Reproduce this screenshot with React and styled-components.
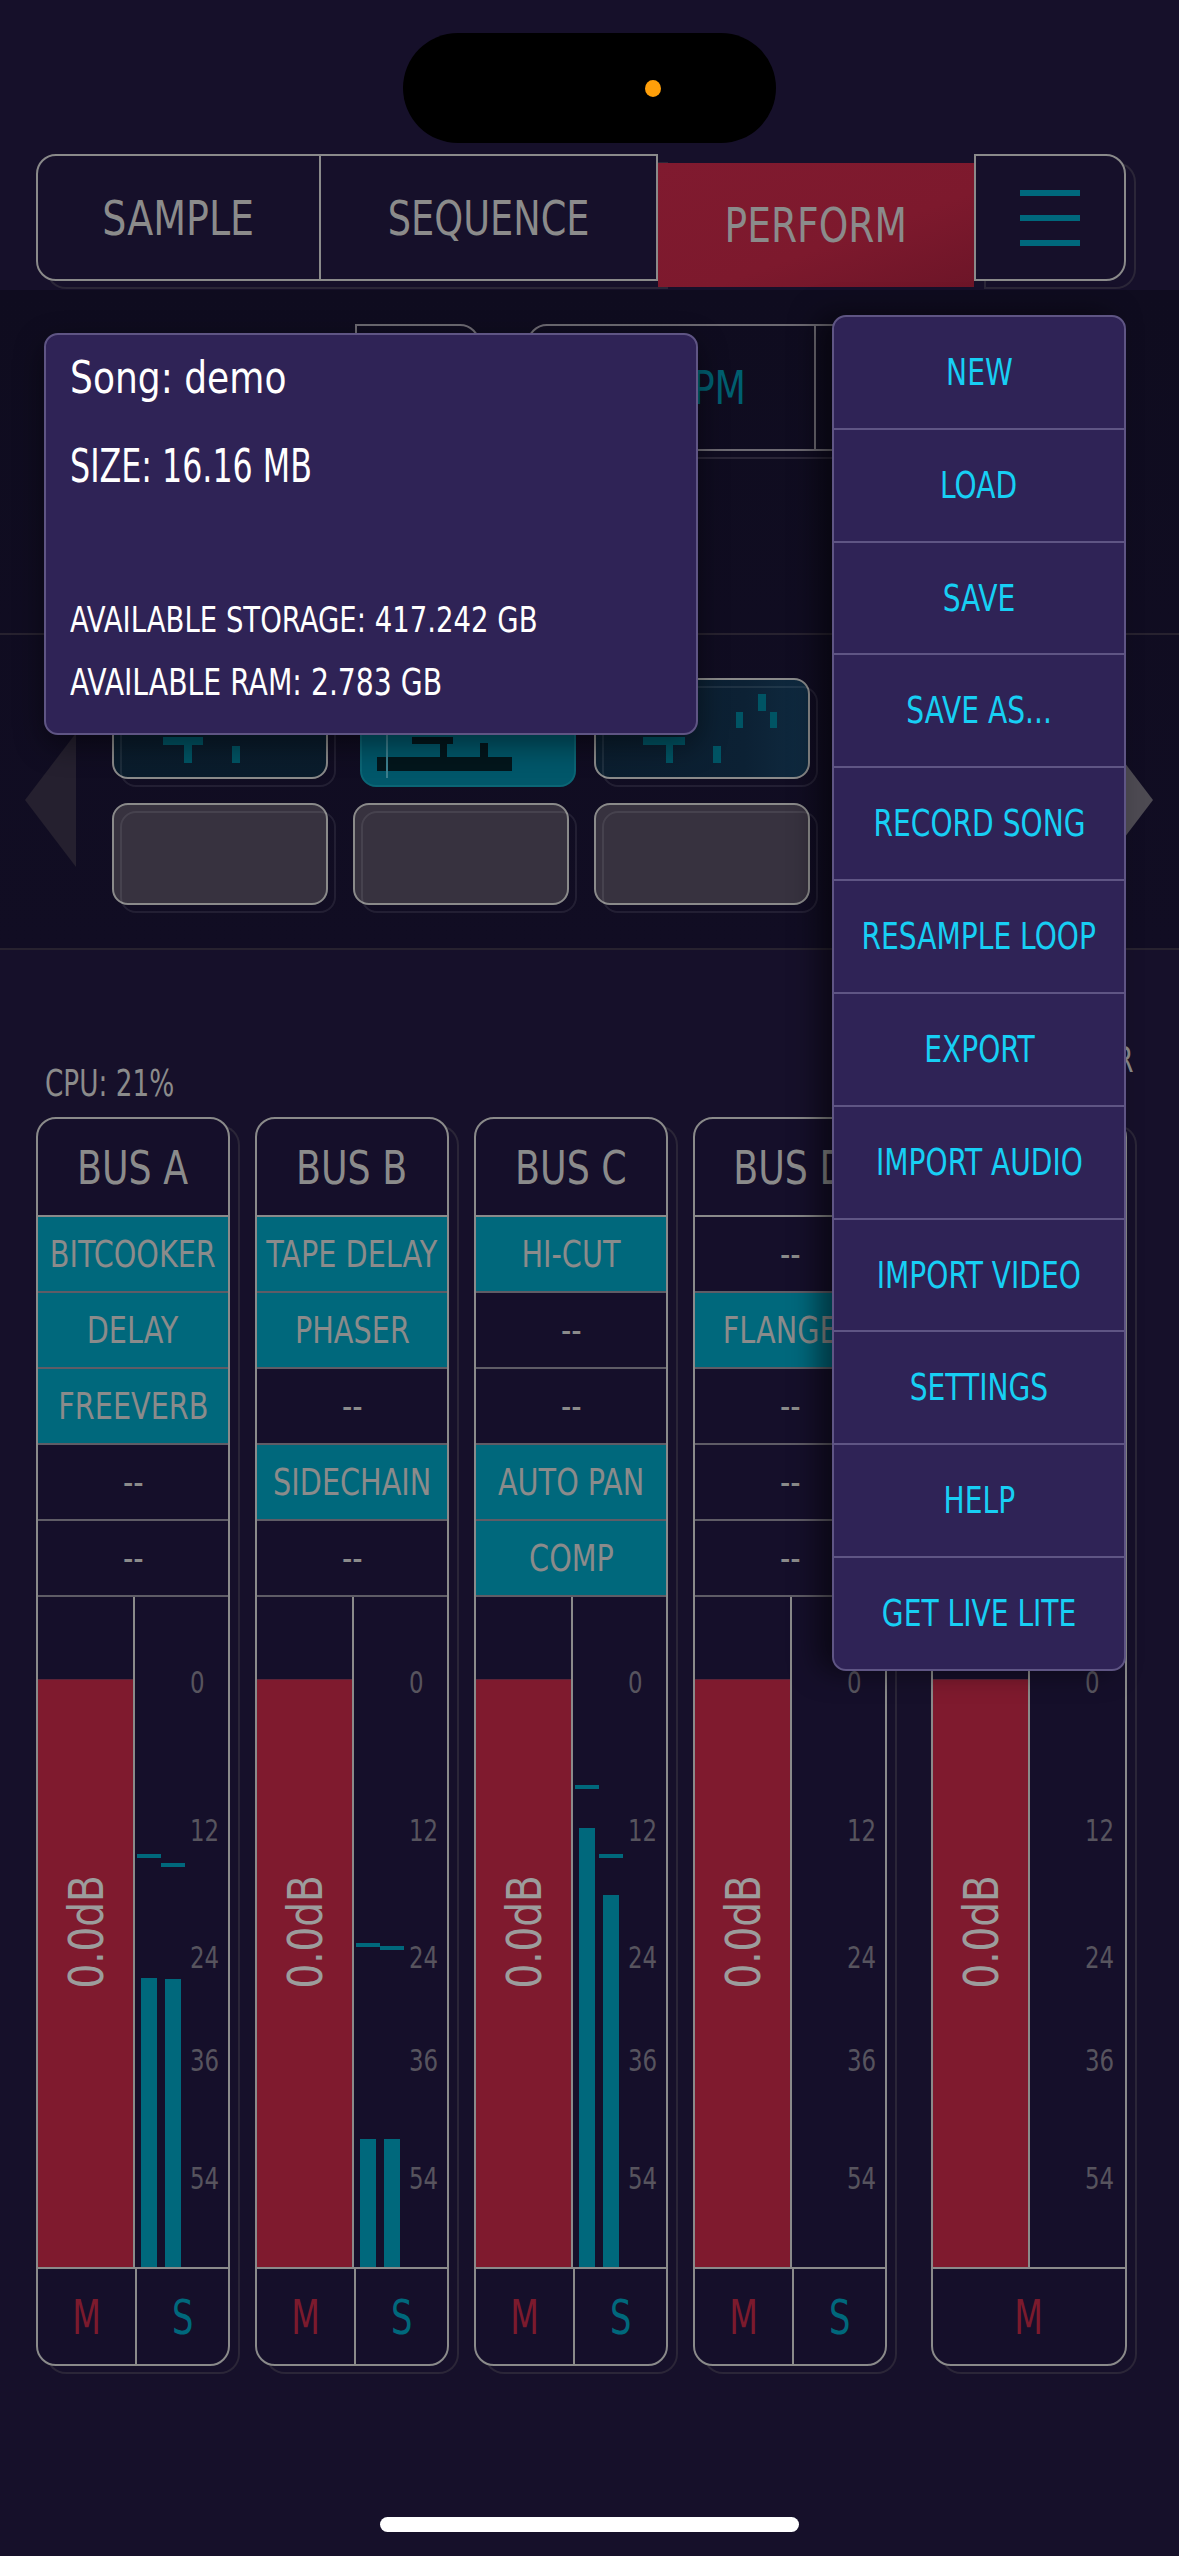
import React from 'react';
import styled, { createGlobalStyle, css } from 'styled-components';

const FONT = `"Liberation Sans Narrow", "DejaVu Sans Condensed", "Liberation Sans", sans-serif`;

const colors = {
  page: '#16102a',
  deck: '#110d22',
  line: '#8a8a8a',
  slotLine: '#5f5c66',
  ring: '#2b2638',
  text: '#8b8b8b',
  teal: '#00687c',
  tealDim: '#005f70',
  red: '#7f1a2e',
  purple: '#2f2356',
  purpleEdge: '#5f5584',
  cyan: '#17cff4',
};

const GlobalStyle = createGlobalStyle`
  html, body { margin: 0; padding: 0; background: ${colors.page}; }
  body { font-family: ${FONT}; }
  * { box-sizing: border-box; }
`;

const ring = (bg) => css`
  box-shadow: 10px 8px 0 -2px ${bg}, 10px 8px 0 0 ${colors.ring};
`;

// the app's font is narrower than anything installed, so squeeze the glyphs
const Squeeze = styled.span`
  display: inline-block;
  white-space: nowrap;
  transform: scaleX(${(p) => p.$sx || 0.85});
  transform-origin: ${(p) => p.$origin || 'center'};
`;

const Screen = styled.div`
  position: relative;
  width: 1179px;
  height: 2556px;
  overflow: hidden;
  background: ${colors.page};
  color: ${colors.text};
  font-family: ${FONT};
`;

const StatusBar = styled.div`
  height: 154px;
  padding-top: 33px;
  display: flex;
  justify-content: center;
`;

const Island = styled.div`
  width: 373px;
  height: 110px;
  border-radius: 55px;
  background: #000;
  display: flex;
  align-items: center;
  justify-content: flex-end;
  padding-right: 115px;
`;

const Camera = styled.span`
  width: 16px;
  height: 17px;
  border-radius: 50%;
  background: #ff9f0a;
`;

const TabBar = styled.nav`
  display: flex;
  margin-left: 36px;
  width: 1090px;
  height: 127px;
`;

const TabGroup = styled.div`
  display: flex;
  width: 622px;
  height: 127px;
  border: 2px solid ${colors.line};
  border-radius: 20px 0 0 20px;
  background: ${colors.page};
  ${ring(colors.page)}
`;

const Tab = styled.div`
  display: flex;
  align-items: center;
  justify-content: center;
  width: ${(p) => (p.$w ? `${p.$w}px` : 'auto')};
  flex: ${(p) => (p.$w ? 'none' : 1)};
  font-size: 48px;
  color: ${colors.text};
  & + & {
    border-left: 2px solid ${colors.line};
  }
`;

const ActiveTab = styled.div`
  width: 316px;
  height: 124px;
  margin-top: 9px;
  display: flex;
  align-items: center;
  justify-content: center;
  font-size: 48px;
  color: ${colors.text};
  background: linear-gradient(160deg, #801a2f 0%, #7d192d 60%, #6d1528 100%);
`;

const MenuButton = styled.div`
  width: 152px;
  height: 127px;
  border: 2px solid ${colors.line};
  border-radius: 0 20px 20px 0;
  display: flex;
  flex-direction: column;
  align-items: center;
  justify-content: center;
  gap: 19px;
  background: ${colors.page};
  ${ring(colors.page)}
`;

const BurgerLine = styled.span`
  width: 60px;
  height: 6px;
  background: ${colors.teal};
`;

const Deck = styled.section`
  margin-top: 9px;
  height: 658px;
  padding-top: 34px;
  display: flex;
  flex-direction: column;
  background: linear-gradient(180deg, #0f0c1f 0%, #110d23 100%);
`;

const TransportRow = styled.div`
  display: flex;
  height: 127px;
  margin-left: 355px;
  gap: 47px;
`;

const TransportBox = styled.div`
  display: flex;
  width: ${(p) => p.$w}px;
  border: 2px solid #6d6a72;
  border-radius: ${(p) => p.$radius};
  ${ring(colors.deck)}
`;

const TransportCell = styled.div`
  display: flex;
  align-items: center;
  justify-content: flex-end;
  width: ${(p) => (p.$w ? `${p.$w}px` : 'auto')};
  flex: ${(p) => (p.$w ? 'none' : 1)};
  padding-right: ${(p) => p.$pr || 0}px;
  font-size: 47px;
  color: ${colors.tealDim};
  & + & {
    border-left: 2px solid #6d6a72;
  }
`;

const PadSection = styled.div`
  margin-top: auto;
  height: 315px;
  border-top: 2px solid #27222f;
  display: flex;
  align-items: center;
`;

const Arrow = styled.svg`
  flex: none;
  margin-top: 16px;
  margin-left: ${(p) => p.$ml || 0}px;
`;

const PadGrid = styled.div`
  display: grid;
  grid-template-columns: repeat(3, 216px);
  grid-template-rows: 101px 102px;
  column-gap: 25px;
  row-gap: 24px;
  margin-left: 36px;
`;

const Pad = styled.div`
  position: relative;
  border-radius: 16px;
  border: 2px solid ${(p) => (p.$active ? '#0b6575' : colors.line)};
  background: ${(p) => p.$bg};
  ${(p) =>
    p.$active
      ? css`
          transform: translate(7px, 8px);
        `
      : css`
          &::after {
            content: '';
            position: absolute;
            top: 6px;
            left: 6px;
            right: -10px;
            bottom: -10px;
            border: 2px solid rgba(255, 255, 255, 0.08);
            border-radius: 16px;
            pointer-events: none;
          }
        `}
`;

const PadArt = styled.svg`
  position: absolute;
  inset: 0;
`;

const Mixer = styled.section`
  border-top: 2px solid #27222f;
  padding-top: 115px;
`;

const LabelRow = styled.div`
  display: flex;
  justify-content: space-between;
  align-items: flex-start;
  margin-left: 45px;
  width: 1089px;
  height: 37px;
  font-size: 37px;
  line-height: 37px;
  color: ${colors.text};
`;

const MasterLabel = styled.span`
  margin-top: -23px;
  font-size: 35px;
`;

const Strips = styled.div`
  display: flex;
  gap: 25px;
  margin-top: 15px;
  margin-left: 36px;
`;

const Strip = styled.div`
  width: ${(p) => p.$w}px;
  margin-left: ${(p) => p.$ml || 0}px;
  height: 1249px;
  display: flex;
  flex-direction: column;
  border: 2px solid ${colors.line};
  border-radius: 20px;
  background: #150f2a;
  overflow: hidden;
  ${ring(colors.page)}
`;

const StripHeader = styled.div`
  height: 98px;
  flex: none;
  display: flex;
  align-items: center;
  justify-content: center;
  border-bottom: 2px solid ${colors.line};
  font-size: 47px;
  color: ${colors.text};
`;

const Slot = styled.div`
  height: 76px;
  flex: none;
  display: flex;
  align-items: center;
  justify-content: center;
  border-bottom: 2px solid ${colors.slotLine};
  background: ${(p) => (p.$on ? colors.teal : 'transparent')};
  font-size: 38px;
  color: ${colors.text};
  &:last-of-type {
    border-bottom-color: ${colors.line};
  }
`;

const MeterArea = styled.div`
  height: 672px;
  flex: none;
  display: flex;
  border-bottom: 2px solid ${colors.line};
`;

const FaderHalf = styled.div`
  position: relative;
  width: 97px;
  display: flex;
  flex-direction: column;
  border-right: 2px solid ${colors.line};
`;

const FaderGap = styled.div`
  height: 82px;
  flex: none;
`;

const FaderFill = styled.div`
  flex: 1;
  background: ${colors.red};
  border-top: 1px solid #5b2338;
`;

const DbLabel = styled.span`
  position: absolute;
  left: 50%;
  top: 50%;
  transform: translate(-50%, -50%) rotate(-90deg) scaleX(0.9);
  font-size: 48px;
  color: #9c9c9c;
  white-space: nowrap;
`;

const MeterHalf = styled.div`
  position: relative;
  flex: 1;
`;

const ScaleLabel = styled.span`
  position: absolute;
  left: 55px;
  font-size: 31px;
  line-height: 31px;
  color: #57545e;
  transform: scaleX(0.82);
  transform-origin: left;
`;

const MeterBar = styled.span`
  position: absolute;
  bottom: 0;
  left: ${(p) => (p.$ch ? 30 : 6)}px;
  width: 16px;
  background: ${colors.teal};
`;

const PeakMark = styled.span`
  position: absolute;
  left: ${(p) => (p.$ch ? 26 : 2)}px;
  width: 24px;
  height: 4px;
  background: ${colors.teal};
`;

const ButtonRow = styled.div`
  flex: 1;
  display: flex;
`;

const ToggleButton = styled.div`
  display: flex;
  align-items: center;
  justify-content: center;
  width: ${(p) => (p.$half ? '97px' : 'auto')};
  flex: ${(p) => (p.$half ? 'none' : 1)};
  font-size: 48px;
  color: ${(p) => (p.$solo ? colors.teal : '#7b1a2d')};
  & + & {
    border-left: 2px solid ${colors.line};
  }
`;

const HomeIndicator = styled.div`
  margin-top: 151px;
  margin-left: 380px;
  width: 419px;
  height: 15px;
  border-radius: 8px;
  background: #fff;
`;

const InfoPopup = styled.div`
  position: absolute;
  left: 44px;
  top: 333px;
  width: 654px;
  height: 402px;
  padding: 21px 0 0 24px;
  border: 2px solid ${colors.purpleEdge};
  border-radius: 14px;
  background: ${colors.purple};
  color: #fff;
  box-shadow: 0 10px 30px rgba(0, 0, 0, 0.45);
`;

const InfoLine = styled.div`
  font-size: ${(p) => p.$size}px;
  line-height: ${(p) => p.$lh}px;
  margin-top: ${(p) => p.$mt || 0}px;
  white-space: nowrap;
  transform: scaleX(${(p) => p.$sx});
  transform-origin: left;
`;

const FileMenu = styled.ul`
  position: absolute;
  left: 832px;
  top: 315px;
  width: 294px;
  height: 1356px;
  margin: 0;
  padding: 0;
  list-style: none;
  display: flex;
  flex-direction: column;
  border: 2px solid ${colors.purpleEdge};
  border-radius: 14px;
  background: ${colors.purple};
  overflow: hidden;
  box-shadow: -14px 0 28px rgba(0, 0, 0, 0.5);
`;

const MenuItem = styled.li`
  flex: 1;
  display: flex;
  align-items: center;
  justify-content: center;
  font-size: 37px;
  color: ${colors.cyan};
  & + & {
    border-top: 2px solid ${colors.purpleEdge};
  }
`;

const SCALE = [
  { label: '0', y: 85 },
  { label: '12', y: 233 },
  { label: '24', y: 360 },
  { label: '36', y: 463 },
  { label: '54', y: 581 },
];

const BUSES = [
  {
    name: 'BUS A',
    slots: [['BITCOOKER', 1], ['DELAY', 1], ['FREEVERB', 1], ['--'], ['--']],
    bars: [289, 288],
    peaks: [257, 266],
  },
  {
    name: 'BUS B',
    slots: [['TAPE DELAY', 1], ['PHASER', 1], ['--'], ['SIDECHAIN', 1], ['--']],
    bars: [128, 128],
    peaks: [346, 349],
  },
  {
    name: 'BUS C',
    slots: [['HI-CUT', 1], ['--'], ['--'], ['AUTO PAN', 1], ['COMP', 1]],
    bars: [439, 372],
    peaks: [188, 257],
  },
  {
    name: 'BUS D',
    slots: [['--'], ['FLANGER', 1], ['--'], ['--'], ['--']],
    bars: [0, 0],
    peaks: null,
  },
];

const MENU = [
  'NEW',
  'LOAD',
  'SAVE',
  'SAVE AS...',
  'RECORD SONG',
  'RESAMPLE LOOP',
  'EXPORT',
  'IMPORT AUDIO',
  'IMPORT VIDEO',
  'SETTINGS',
  'HELP',
  'GET LIVE LITE',
];

const PADS = [
  {
    bg: 'linear-gradient(180deg, #0b1e2f 0%, #0a1c2c 100%)',
    fill: '#005464',
    rects: [[49, 57, 40, 8], [70, 65, 8, 18], [118, 66, 8, 17], [150, 20, 8, 22]],
  },
  {
    active: true,
    bg: '#01576a',
    fill: '#03161c',
    rects: [[50, 49, 41, 7], [78, 55, 7, 14], [118, 55, 8, 14], [15, 69, 135, 14]],
    playhead: 24,
  },
  {
    bg: 'linear-gradient(90deg, #0b1e2f 0%, #0c2134 70%, #0f2a40 100%)',
    fill: '#005464',
    rects: [[162, 14, 8, 17], [140, 32, 7, 16], [174, 32, 7, 16], [47, 57, 42, 8], [70, 65, 7, 18], [117, 66, 8, 17]],
  },
  { bg: '#37323f' },
  { bg: '#37323f' },
  { bg: '#37323f' },
];

function PadTile({ pad }) {
  return (
    <Pad $bg={pad.bg} $active={pad.active}>
      {pad.rects && (
        <PadArt width="212" height="97">
          {pad.rects.map(([x, y, w, h], i) => (
            <rect key={i} x={x} y={y} width={w} height={h} fill={pad.fill} />
          ))}
          {pad.playhead && <rect x={pad.playhead} y="0" width="2" height="90" fill="#3c7f8e" />}
        </PadArt>
      )}
    </Pad>
  );
}

function Meter({ bars, peaks }) {
  return (
    <MeterHalf>
      {SCALE.map((s) => (
        <ScaleLabel key={s.label} style={{ top: s.y - 15 }}>
          {s.label}
        </ScaleLabel>
      ))}
      {bars &&
        bars.map((h, i) => (h > 0 ? <MeterBar key={i} $ch={i} style={{ height: h }} /> : null))}
      {peaks && peaks.map((t, i) => <PeakMark key={i} $ch={i} style={{ top: t }} />)}
    </MeterHalf>
  );
}

function Fader() {
  return (
    <FaderHalf>
      <FaderGap />
      <FaderFill />
      <DbLabel>0.0dB</DbLabel>
    </FaderHalf>
  );
}

function BusStrip({ bus }) {
  return (
    <Strip $w={194}>
      <StripHeader>
        <Squeeze $sx={0.86}>{bus.name}</Squeeze>
      </StripHeader>
      {bus.slots.map(([label, on], i) => (
        <Slot key={i} $on={!!on}>
          <Squeeze $sx={0.84}>{label}</Squeeze>
        </Slot>
      ))}
      <MeterArea>
        <Fader />
        <Meter bars={bus.bars} peaks={bus.peaks} />
      </MeterArea>
      <ButtonRow>
        <ToggleButton $half>
          <Squeeze $sx={0.77}>M</Squeeze>
        </ToggleButton>
        <ToggleButton $solo>
          <Squeeze $sx={0.78}>S</Squeeze>
        </ToggleButton>
      </ButtonRow>
    </Strip>
  );
}

function MasterStrip() {
  return (
    <Strip $w={196} $ml={19}>
      <StripHeader>
        <Squeeze $sx={0.86}>MAIN</Squeeze>
      </StripHeader>
      {[0, 1, 2, 3, 4].map((i) => (
        <Slot key={i}>
          <Squeeze>--</Squeeze>
        </Slot>
      ))}
      <MeterArea>
        <Fader />
        <Meter />
      </MeterArea>
      <ButtonRow>
        <ToggleButton>
          <Squeeze $sx={0.77}>M</Squeeze>
        </ToggleButton>
      </ButtonRow>
    </Strip>
  );
}

export default function App() {
  return (
    <Screen>
      <GlobalStyle />
      <StatusBar>
        <Island>
          <Camera />
        </Island>
      </StatusBar>

      <TabBar>
        <TabGroup>
          <Tab $w={281}>
            <Squeeze $sx={0.88}>SAMPLE</Squeeze>
          </Tab>
          <Tab>
            <Squeeze $sx={0.85}>SEQUENCE</Squeeze>
          </Tab>
        </TabGroup>
        <ActiveTab>
          <Squeeze $sx={0.87}>PERFORM</Squeeze>
        </ActiveTab>
        <MenuButton>
          <BurgerLine />
          <BurgerLine />
          <BurgerLine />
        </MenuButton>
      </TabBar>

      <Deck>
        <TransportRow>
          <TransportBox $w={125} $radius="0 20px 0 0" />
          <TransportBox $w={580} $radius="20px 0 0 0">
            <TransportCell $w={285} $pr={68}>
              <Squeeze $sx={0.86} $origin="right">
                BPM
              </Squeeze>
            </TransportCell>
            <TransportCell />
          </TransportBox>
        </TransportRow>

        <PadSection>
          <Arrow width="51" height="134" $ml={25}>
            <polygon points="0,67 51,0 51,134" fill="#25202f" />
          </Arrow>
          <PadGrid>
            {PADS.map((p, i) => (
              <PadTile key={i} pad={p} />
            ))}
          </PadGrid>
          <Arrow width="51" height="134" $ml={292}>
            <polygon points="51,67 0,0 0,134" fill="#4d4a52" />
          </Arrow>
        </PadSection>
      </Deck>

      <Mixer>
        <LabelRow>
          <Squeeze $sx={0.79} $origin="left">
            CPU: 21%
          </Squeeze>
          <MasterLabel>
            <Squeeze $sx={0.85} $origin="right">
              MASTER
            </Squeeze>
          </MasterLabel>
        </LabelRow>
        <Strips>
          {BUSES.map((b) => (
            <BusStrip key={b.name} bus={b} />
          ))}
          <MasterStrip />
        </Strips>
      </Mixer>

      <HomeIndicator />

      <InfoPopup>
        <InfoLine $size={45} $lh={44} $sx={0.89}>
          Song: demo
        </InfoLine>
        <InfoLine $size={47} $lh={44} $mt={44} $sx={0.75}>
          SIZE: 16.16 MB
        </InfoLine>
        <InfoLine $size={36} $lh={35} $mt={114} $sx={0.85}>
          AVAILABLE STORAGE: 417.242 GB
        </InfoLine>
        <InfoLine $size={37} $lh={35} $mt={28} $sx={0.85}>
          AVAILABLE RAM: 2.783 GB
        </InfoLine>
      </InfoPopup>

      <FileMenu>
        {MENU.map((m) => (
          <MenuItem key={m}>
            <Squeeze $sx={0.845}>{m}</Squeeze>
          </MenuItem>
        ))}
      </FileMenu>
    </Screen>
  );
}
